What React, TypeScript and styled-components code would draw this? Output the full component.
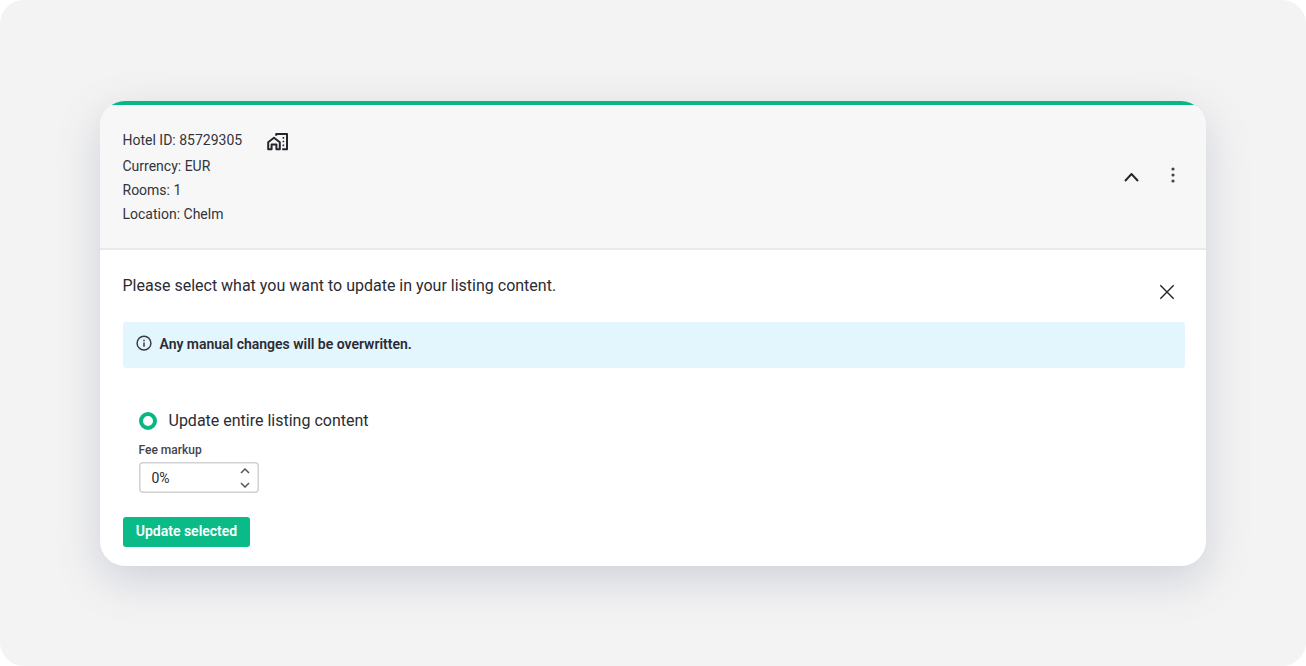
import React from 'react';
import styled, { createGlobalStyle } from 'styled-components';

const GlobalStyle = createGlobalStyle`
  * { box-sizing: border-box; }
  body { margin: 0; background: #fff; font-family: Roboto, sans-serif; color: #2b2b33; }
`;

const Page = styled.main`
  height: 666px;
  padding: 100.5px 100px 100px;
  border-radius: 24px;
  background: #f3f3f3;
`;

const Card = styled.section`
  height: 465.5px;
  border-radius: 25px;
  background: #fff;
  overflow: hidden;
  box-shadow: 0 14px 44px rgba(80, 92, 132, 0.22);
`;

const Header = styled.header`
  display: flex;
  justify-content: space-between;
  height: 149.5px;
  padding: 22.5px 23px 0 22.5px;
  border-top: 4px solid #07b783;
  border-bottom: 2px solid #e9e9ea;
  background: #f7f7f7;
`;

const Details = styled.div`
  display: flex;
  flex-direction: column;
`;

const Detail = styled.div<{ $tall?: boolean }>`
  display: flex;
  align-items: ${({ $tall }) => ($tall ? 'flex-start' : 'center')};
  height: ${({ $tall }) => ($tall ? 27 : 24)}px;
  font-size: 14px;
  line-height: 26px;
  gap: 24px;
  color: #33333a;

  svg {
    margin-top: 3px;
  }
`;

const Actions = styled.div`
  display: flex;
  gap: 21px;
  padding-top: 35px;
`;

const IconButton = styled.button`
  display: flex;
  width: 20px;
  height: 26px;
  padding: 0;
  border: 0;
  align-items: center;
  justify-content: center;
  background: transparent;
  color: #25252c;
`;

const CollapseButton = styled(IconButton)`
  padding-top: 5px;
  padding-right: 1px;
`;

const Body = styled.div`
  padding: 22px 21px 0 23px;
`;

const TitleRow = styled.div`
  display: flex;
  justify-content: space-between;
  height: 50px;
  padding-right: 8px;
`;

const Title = styled.h1`
  margin: 0 0 0 -0.5px;
  font-size: 16px;
  font-weight: 400;
  line-height: 28px;
`;

const CloseButton = styled(IconButton)`
  margin-top: 7px;
`;

const Notice = styled.div`
  display: flex;
  align-items: center;
  height: 46px;
  padding: 0 0 3px 12.5px;
  gap: 7px;
  border-radius: 3px;
  background: #e3f5fd;
  font-size: 14px;
  font-weight: 600;
  letter-spacing: -0.015px;
`;

const Form = styled.div`
  padding: 40px 0 0 15.5px;
`;

const Option = styled.label`
  display: flex;
  align-items: center;
  height: 26px;
  gap: 12px;
  font-size: 16px;
  line-height: 24px;
`;

const Radio = styled.span`
  width: 18px;
  height: 18px;
  border: 4px solid #07b783;
  border-radius: 50%;
`;

const FieldLabel = styled.div`
  margin-top: 8px;
  font-size: 12px;
  font-weight: 500;
  line-height: 16px;
  color: #44444b;
`;

const NumberField = styled.div`
  display: flex;
  align-items: center;
  justify-content: space-between;
  width: 120.5px;
  height: 31px;
  margin-top: 4px;
  padding: 0 8px 0 11.5px;
  border-radius: 4px;
  box-shadow: inset 0 0 0 1.5px #d2d2d4;
  font-size: 14px;
  padding-left: 13px;
  padding-right: 9.5px;
`;

const Steppers = styled.span`
  display: flex;
  flex-direction: column;
  gap: 8px;
  color: #55555c;
`;

const SubmitButton = styled.button`
  display: block;
  width: 127px;
  height: 30px;
  margin-top: 24px;
  padding: 0 0 2px;
  border: 0;
  border-radius: 3px;
  background: #0abb87;
  color: #fff;
  font: 600 14px Roboto, sans-serif;
`;

type ChevronProps = { width: number; height: number; down?: boolean; stroke: number };

const Chevron = ({ width, height, down, stroke }: ChevronProps) => (
  <svg width={width} height={height} fill="none" stroke="currentColor" strokeWidth={stroke}>
    <path d={down ? `M1 1L${width / 2} ${height - 1}L${width - 1} 1` : `M1 ${height - 1}L${width / 2} 1L${width - 1} ${height - 1}`} />
  </svg>
);

const PropertyIcon = () => (
  <svg width="23" height="23" viewBox="0 0 23 23" fill="none" stroke="#25252c" strokeWidth="2" strokeLinejoin="round">
    <path d="M2.2 12.2L8 7.8L13.8 12.2V19.2H10.4V14.6H5.6V19.2H2.2Z" />
    <path d="M10.2 5.8V4H21V19.2H16.2" />
    <path d="M16.6 7.8H18.2M16.6 11.5H18.2M16.6 15.3H18.2" strokeWidth="1.7" />
  </svg>
);

export default function App() {
  return (
    <>
      <GlobalStyle />
      <Page>
        <Card>
          <Header>
            <Details>
              <Detail $tall>
                <span>Hotel ID: 85729305</span>
                <PropertyIcon />
              </Detail>
              <Detail>Currency: EUR</Detail>
              <Detail>Rooms: 1</Detail>
              <Detail>Location: Chelm</Detail>
            </Details>
            <Actions>
              <CollapseButton aria-label="Collapse">
                <Chevron width={15} height={9} stroke={2} />
              </CollapseButton>
              <IconButton aria-label="More actions">
                <svg width="4" height="16" fill="#45454b">
                  <circle cx="2" cy="2" r="1.6" />
                  <circle cx="2" cy="8" r="1.6" />
                  <circle cx="2" cy="14" r="1.6" />
                </svg>
              </IconButton>
            </Actions>
          </Header>
          <Body>
            <TitleRow>
              <Title>Please select what you want to update in your listing content.</Title>
              <CloseButton aria-label="Close">
                <svg width="16" height="16" stroke="currentColor" strokeWidth="1.4">
                  <path d="M1.3 1.3L14.7 14.7M14.7 1.3L1.3 14.7" />
                </svg>
              </CloseButton>
            </TitleRow>
            <Notice>
              <svg width="17" height="17" viewBox="0 0 17 17" fill="none" stroke="#3a3a42" strokeWidth="1.5">
                <circle cx="8" cy="8.2" r="6.9" />
                <path d="M8 7.4V11.8M8 4.7V6.2" />
              </svg>
              <span>Any manual changes will be overwritten.</span>
            </Notice>
            <Form>
              <Option>
                <Radio />
                <span>Update entire listing content</span>
              </Option>
              <FieldLabel>Fee markup</FieldLabel>
              <NumberField>
                <span>0%</span>
                <Steppers>
                  <Chevron width={10} height={6} stroke={1.5} />
                  <Chevron width={10} height={6} stroke={1.5} down />
                </Steppers>
              </NumberField>
            </Form>
            <SubmitButton>Update selected</SubmitButton>
          </Body>
        </Card>
      </Page>
    </>
  );
}
